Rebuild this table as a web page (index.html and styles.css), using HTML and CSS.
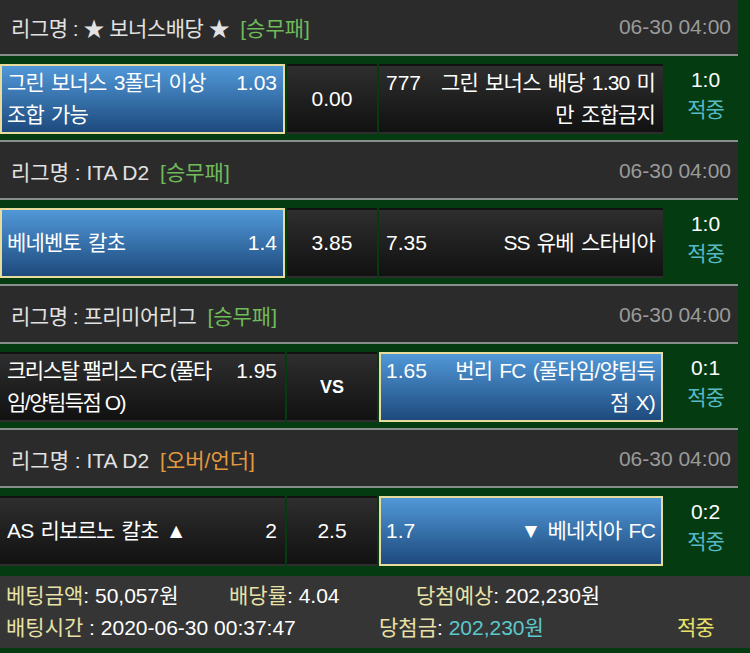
FILE: index.html
```html
<!DOCTYPE html>
<html lang="ko">
<head>
<meta charset="utf-8">
<title>베팅내역</title>
<link rel="stylesheet" href="styles.css">
</head>
<body>
<div class="board">
  <section class="block">
    <div class="league-head">
      <div class="league"><span class="league-name">리그명 : ★ 보너스배당 ★</span><span class="tag tag-green">[승무패]</span></div>
      <div class="date">06-30 04:00</div>
    </div>
    <div class="match">
      <div class="cell side home selected">
        <div class="side-inner">
          <div class="name">그린 보너스 3폴더 이상<br>조합 가능</div>
          <div class="odds">1.03</div>
        </div>
      </div>
      <div class="cell draw">0.00</div>
      <div class="cell side away">
        <div class="side-inner">
          <div class="odds">777</div>
          <div class="name">그린 보너스 배당 1.30 미<br>만 조합금지</div>
        </div>
      </div>
      <div class="result"><div class="score">1:0</div><div class="status">적중</div></div>
    </div>
  </section>

  <section class="block">
    <div class="league-head">
      <div class="league"><span class="league-name mixed">리그명 : ITA D2</span><span class="tag tag-green">[승무패]</span></div>
      <div class="date">06-30 04:00</div>
    </div>
    <div class="match">
      <div class="cell side home selected">
        <div class="side-inner">
          <div class="name">베네벤토 칼초</div>
          <div class="odds">1.4</div>
        </div>
      </div>
      <div class="cell draw">3.85</div>
      <div class="cell side away">
        <div class="side-inner">
          <div class="odds">7.35</div>
          <div class="name">SS 유베 스타비아</div>
        </div>
      </div>
      <div class="result"><div class="score">1:0</div><div class="status">적중</div></div>
    </div>
  </section>

  <section class="block">
    <div class="league-head">
      <div class="league"><span class="league-name">리그명 : 프리미어리그</span><span class="tag tag-green">[승무패]</span></div>
      <div class="date">06-30 04:00</div>
    </div>
    <div class="match">
      <div class="cell side home">
        <div class="side-inner">
          <div class="name tight">크리스탈 팰리스 FC (풀타<br>임/양팀득점 O)</div>
          <div class="odds">1.95</div>
        </div>
      </div>
      <div class="cell draw"><span class="vs">VS</span></div>
      <div class="cell side away selected">
        <div class="side-inner">
          <div class="odds">1.65</div>
          <div class="name">번리 FC (풀타임/양팀득<br>점 X)</div>
        </div>
      </div>
      <div class="result"><div class="score">0:1</div><div class="status">적중</div></div>
    </div>
  </section>

  <section class="block">
    <div class="league-head">
      <div class="league"><span class="league-name mixed">리그명 : ITA D2</span><span class="tag tag-orange">[오버/언더]</span></div>
      <div class="date">06-30 04:00</div>
    </div>
    <div class="match">
      <div class="cell side home">
        <div class="side-inner">
          <div class="name">AS 리보르노 칼초 ▲</div>
          <div class="odds">2</div>
        </div>
      </div>
      <div class="cell draw">2.5</div>
      <div class="cell side away selected">
        <div class="side-inner">
          <div class="odds">1.7</div>
          <div class="name">▼ 베네치아 FC</div>
        </div>
      </div>
      <div class="result"><div class="score">0:2</div><div class="status">적중</div></div>
    </div>
  </section>
</div>

<footer class="summary">
  <div class="sum-row">
    <div class="sum-item w-a"><span class="label">베팅금액</span>: 50,057원</div>
    <div class="sum-item w-b"><span class="label">배당률</span>: 4.04</div>
    <div class="sum-item"><span class="label">당첨예상</span>: 202,230원</div>
  </div>
  <div class="sum-row">
    <div class="sum-item w-c"><span class="label">배팅시간</span> : 2020-06-30 00:37:47</div>
    <div class="sum-item w-d"><span class="label">당첨금</span>: <span class="win">202,230원</span></div>
    <div class="sum-item hit">적중</div>
  </div>
</footer>
</body>
</html>
```
FILE: styles.css
```css
* { box-sizing: border-box; }

html, body {
  margin: 0;
  padding: 0;
}

body {
  width: 750px;
  height: 653px;
  overflow: hidden;
  background: #043b11;
  color: #ffffff;
  font-family: "Liberation Sans", "Noto Sans CJK KR", sans-serif;
  font-size: 21px;
}

.board {
  width: 738px;
  margin-top: -4px;
}

.block {
  padding-bottom: 6px;
}

.league-head {
  height: 60px;
  margin-bottom: 8px;
  padding: 2px 7px 0 11px;
  background: #2b2b2b;
  border-top: 2px solid #8a8e8a;
  border-bottom: 2px solid #8a8e8a;
  display: flex;
  align-items: center;
  justify-content: space-between;
}

.league {
  display: flex;
  align-items: center;
  color: #e2e2e2;
}

.league-name {
  letter-spacing: -0.5px;
}

.league-name.mixed {
  letter-spacing: 0;
}

.tag {
  margin-left: 11px;
}

.tag-green { color: #6fbb5a; }
.tag-orange { color: #e39a3e; }

.date {
  color: #9a9a9a;
}

.match {
  height: 70px;
  display: flex;
  gap: 2px;
}

.cell {
  border: 2px solid transparent;
  background: linear-gradient(#2e2e2e, #111111);
}

.cell.selected {
  background: linear-gradient(#5198d8, #1d4a7d);
  border-color: #e8dc9c;
}

.home { width: 285px; }
.draw { width: 90px; }
.away { width: 284px; }

.side {
  display: flex;
  align-items: center;
  padding: 0 6px 0 5px;
}

.side-inner {
  width: 100%;
  display: flex;
  align-items: baseline;
  gap: 12px;
}

.name {
  flex: 1;
  min-width: 0;
  line-height: 32px;
  white-space: nowrap;
  letter-spacing: -0.8px;
  word-spacing: 2px;
}

.name.tight {
  letter-spacing: -1.5px;
  word-spacing: 0;
}

.away .name {
  text-align: right;
}

.odds {
  line-height: 32px;
}

.draw {
  display: flex;
  align-items: center;
  justify-content: center;
}

.vs {
  font-weight: bold;
  font-size: 18px;
}

.result {
  flex: 1;
  display: flex;
  flex-direction: column;
  align-items: center;
  justify-content: center;
  padding: 0 0 8px 8px;
  line-height: 30px;
}

.status {
  color: #55b9c6;
  letter-spacing: -1px;
}

.summary {
  margin-top: 4px;
  height: 72px;
  padding: 2px 0 6px 6px;
  background: #353535;
}

.sum-row {
  height: 32px;
  display: flex;
  align-items: center;
  white-space: nowrap;
}

.w-a { width: 223px; }
.w-b { width: 187px; }
.w-c { width: 373px; }
.w-d { width: 298px; }

.label {
  color: #e8e2a6;
}

.win {
  color: #5cc8cc;
}

.hit {
  color: #e8e26a;
  letter-spacing: -1px;
}
```
